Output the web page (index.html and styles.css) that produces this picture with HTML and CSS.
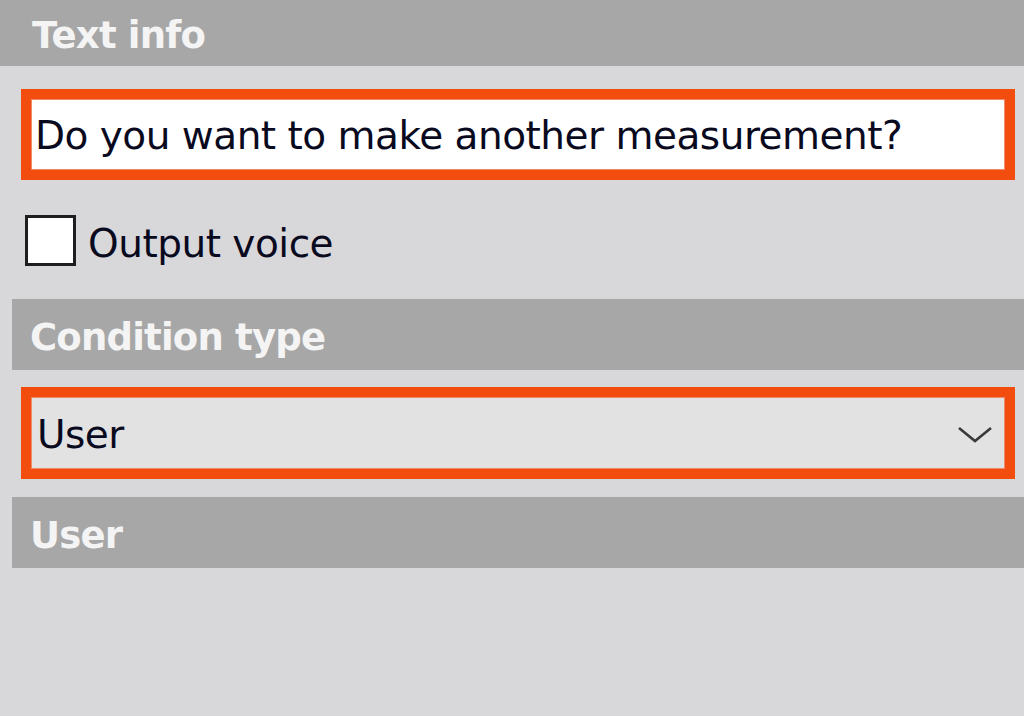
FILE: index.html
```html
<!DOCTYPE html>
<html>
<head>
<meta charset="utf-8">
<link rel="stylesheet" href="styles.css">
</head>
<body>
<div class="panel">
  <div class="section-header first">Text info</div>
  <div class="field text-field">
    <div class="field-inner white">Do you want to make another measurement?</div>
  </div>
  <label class="check-row">
    <span class="check-box"></span>
    <span class="check-label">Output voice</span>
  </label>
  <div class="section-header">Condition type</div>
  <div class="field select-field">
    <div class="field-inner grey">
      <span class="select-value">User</span>
      <svg class="chevron" width="36" height="18" viewBox="0 0 36 18">
        <path d="M2 2 L18 15 L34 2" fill="none" stroke="#3a3a3a" stroke-width="2.6"/>
      </svg>
    </div>
  </div>
  <div class="section-header">User</div>
</div>
</body>
</html>
```

FILE: styles.css
```css
html, body {
  margin: 0;
  padding: 0;
  background: #d8d7da;
}
body {
  font-family: "DejaVu Sans", Verdana, sans-serif;
  width: 1024px;
  height: 716px;
  overflow: hidden;
}
.panel {
  display: flex;
  flex-direction: column;
}
.section-header {
  height: 71px;
  box-sizing: border-box;
  margin-left: 12px;
  padding-left: 18px;
  padding-top: 6px;
  background: #a7a7a7;
  color: #f4f4f4;
  font-weight: bold;
  font-size: 37px;
  letter-spacing: -0.8px;
  display: flex;
  align-items: center;
}
.section-header.first {
  height: 66px;
  margin-left: 0;
  padding-left: 32px;
  padding-top: 4px;
}
.field {
  margin-left: 21px;
  width: 994px;
  box-sizing: border-box;
  border: 10px solid #f24d0f;
  box-shadow: inset 0 0 0 1px #f08a66;
}
.text-field {
  margin-top: 23px;
  height: 91px;
}
.select-field {
  margin-top: 17px;
  height: 92px;
}
.field-inner {
  margin: 1px;
  box-sizing: border-box;
  display: flex;
  align-items: center;
  font-size: 39px;
  letter-spacing: -0.5px;
  color: #0a0a1e;
  height: calc(100% - 2px);
  padding-top: 2px;
}
.field-inner.white {
  background: #ffffff;
  padding-left: 3px;
}
.field-inner.grey {
  background: #e2e2e2;
  padding-left: 5px;
  padding-right: 11px;
  justify-content: space-between;
}
.chevron {
  display: block;
  margin-top: 2px;
}
.check-row {
  margin-top: 35px;
  margin-left: 25px;
  height: 51px;
  display: flex;
  align-items: center;
  gap: 12px;
}
.check-box {
  width: 51px;
  height: 51px;
  box-sizing: border-box;
  border: 3px solid #1e1e1e;
  background: #ffffff;
}
.check-label {
  font-size: 39px;
  letter-spacing: -0.5px;
  color: #0a0a1e;
  padding-top: 5px;
}
.check-row + .section-header {
  margin-top: 33px;
}
.select-field + .section-header {
  margin-top: 18px;
}
```
